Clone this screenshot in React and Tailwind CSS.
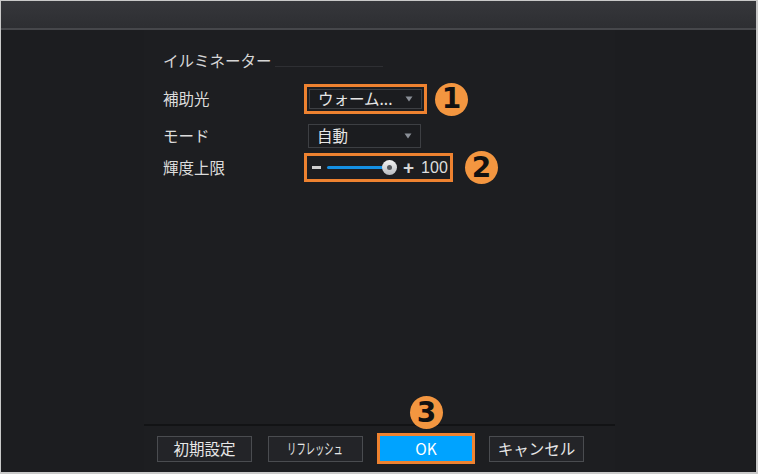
const jp = { fontFamily: '"Noto Sans CJK JP", "Noto Sans", sans-serif' };

// small triangle used by the dropdowns
const Caret = () => (
  <svg width="8" height="6" viewBox="0 0 8 6" className="shrink-0">
    <path d="M0.5 0.5 L7.5 0.5 L4 5.5 Z" fill="#8a8f97" />
  </svg>
);

const Badge = ({ n, className = '' }) => (
  <div
    className={`flex h-[33px] w-[33px] items-center justify-center rounded-full bg-[#f39640] text-[28px] font-bold leading-none text-[#111] ${className}`}
    style={{ fontFamily: '"DejaVu Sans", "Liberation Sans", sans-serif' }}
  >
    {n}
  </div>
);

const Select = ({ value, className = '' }) => (
  <div className={`flex w-[113px] items-center justify-between border border-[#3d3f43] bg-[#1b1c1f] pl-[8px] pr-[8px] text-[15.5px] text-[#e6e6e6] ${className}`}>
    <span>{value}</span>
    <Caret />
  </div>
);

const Button = ({ children, className = '' }) => (
  <button className={`flex h-[26px] w-[95px] items-center justify-center border border-[#4a4c50] bg-[#232428] text-[15.5px] text-[#e6e6e6] ${className}`}>
    {children}
  </button>
);

const App = () => {
  return (
    <div className="h-[474px] w-[758px] overflow-hidden bg-[#c9c9c9] pb-[2px] pl-[1px] pr-[2px] pt-[1px]" style={jp}>
      <div className="flex h-full w-full flex-col bg-[#1c1d20]">
        {/* Title bar */}
        <div className="h-[29px] shrink-0 border-b-2 border-[#46474b] bg-gradient-to-b from-[#36373b] to-[#2d2e32]" />

        <div className="flex flex-1">
          <div className="w-[143px] shrink-0" />

          {/* Settings panel */}
          <div className="flex w-[471px] shrink-0 flex-col bg-[#1d1e21]">
            <div className="flex-1 pl-[19px] pt-[21px]">
              <div className="flex h-[20px] items-center">
                <span className="text-[15.5px] text-[#d6d6d6]">イルミネーター</span>
                <div className="ml-[3px] mt-[10px] h-px w-[108px] bg-[#2e2f33]" />
              </div>

              <div className="mt-[13px] flex h-[30px] items-center">
                <span className="w-[141px] text-[15.5px] text-[#dcdcdc]">補助光</span>
                <div className="border-[3px] border-[#ee8230] p-[2px]">
                  <Select value="ウォーム..." className="h-[20px] w-[108px]" />
                </div>
                <Badge n="1" className="ml-[8px]" />
              </div>

              <div className="mt-[10px] flex h-[24px] items-center">
                <span className="w-[145px] text-[15.5px] text-[#dcdcdc]">モード</span>
                <Select value="自動" className="h-[24px]" />
              </div>

              <div className="mt-[5px] flex h-[29px] items-center">
                <span className="w-[141px] text-[15.5px] text-[#dcdcdc]">輝度上限</span>
                <div className="flex h-[29px] w-[149px] items-center border-[3px] border-[#ee8230] pl-[5px]">
                  <div className="h-[3px] w-[9px] bg-[#cfcfcf]" />
                  <div className="relative ml-[6px] flex h-[15px] w-[70px] items-center">
                    <div className="h-[3px] w-[62px] rounded-full bg-[#1590e3]" />
                    <div className="absolute right-0 top-0 flex h-[15px] w-[15px] items-center justify-center rounded-full bg-gradient-to-b from-[#f4f4f4] to-[#b9bcc0]">
                      <div className="h-[5px] w-[5px] rounded-full bg-[#55585d]" />
                    </div>
                  </div>
                  <span className="ml-[6px] text-[19px] font-bold leading-none text-[#d6d6d6]" style={{ fontFamily: '"Liberation Sans", sans-serif' }}>+</span>
                  <span className="ml-[7px] text-[16px] text-[#dedede]" style={{ fontFamily: '"Liberation Sans", sans-serif' }}>100</span>
                </div>
                <Badge n="2" className="ml-[12px]" />
              </div>
            </div>

            {/* Footer buttons */}
            <div className="h-[2px] bg-[#121315]" />
            <div className="flex h-[46px] items-center gap-[16px] pb-[1px] pl-[13px]">
              <Button>初期設定</Button>
              <Button>
                <span className="inline-block scale-x-[0.62] whitespace-nowrap text-[15px]">リフレッシュ</span>
              </Button>
              <div className="relative">
                <Badge n="3" className="absolute -top-[40px] left-[31px] h-[31px] w-[31px] text-[26px]" />
                <button className="ml-px flex h-[25px] w-[92px] items-center justify-center bg-[#00a3ff] text-[15.5px] text-white outline-[3px] outline-[#ee8230] outline-solid">
                  OK
                </button>
              </div>
              <Button className="ml-px w-[94px]">キャンセル</Button>
            </div>
          </div>

          <div className="flex-1 border-r border-[#161719]" />
        </div>
      </div>
    </div>
  );
};

export default App;
